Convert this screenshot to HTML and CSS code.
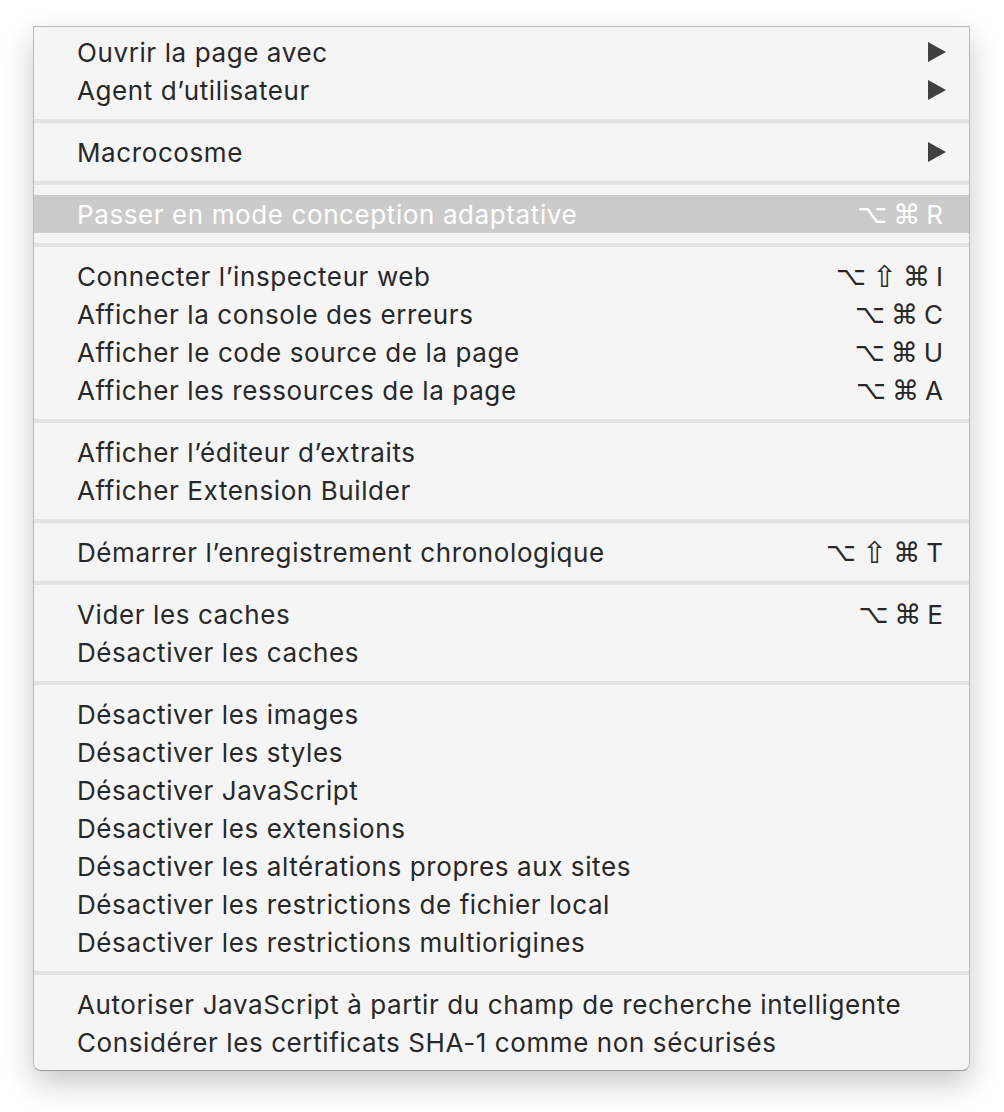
FILE: index.html
```html
<!DOCTYPE html>
<html lang="fr">
<head>
<meta charset="utf-8">
<title>Menu Développement</title>
<link rel="stylesheet" href="styles.css">
</head>
<body>
<div class="menu">
  <div class="row"><span class="label">Ouvrir la page avec</span><svg class="arrow" viewBox="0 0 18 20"><polygon points="0,0 18,10 0,20"/></svg></div>
  <div class="row"><span class="label">Agent d’utilisateur</span><svg class="arrow" viewBox="0 0 18 20"><polygon points="0,0 18,10 0,20"/></svg></div>
  <div class="sep"></div>
  <div class="row"><span class="label">Macrocosme</span><svg class="arrow" viewBox="0 0 18 20"><polygon points="0,0 18,10 0,20"/></svg></div>
  <div class="sep"></div>
  <div class="row active"><span class="label">Passer en mode conception adaptative</span><span class="keys"><span class="k opt">⌥</span><span class="k cmd">⌘</span><span class="k">R</span></span></div>
  <div class="sep"></div>
  <div class="row"><span class="label">Connecter l’inspecteur web</span><span class="keys"><span class="k opt">⌥</span><span class="k shift">⇧</span><span class="k cmd">⌘</span><span class="k">I</span></span></div>
  <div class="row"><span class="label">Afficher la console des erreurs</span><span class="keys"><span class="k opt">⌥</span><span class="k cmd">⌘</span><span class="k">C</span></span></div>
  <div class="row"><span class="label">Afficher le code source de la page</span><span class="keys"><span class="k opt">⌥</span><span class="k cmd">⌘</span><span class="k">U</span></span></div>
  <div class="row"><span class="label">Afficher les ressources de la page</span><span class="keys"><span class="k opt">⌥</span><span class="k cmd">⌘</span><span class="k">A</span></span></div>
  <div class="sep"></div>
  <div class="row"><span class="label">Afficher l’éditeur d’extraits</span></div>
  <div class="row"><span class="label">Afficher Extension Builder</span></div>
  <div class="sep"></div>
  <div class="row"><span class="label">Démarrer l’enregistrement chronologique</span><span class="keys"><span class="k opt">⌥</span><span class="k shift">⇧</span><span class="k cmd">⌘</span><span class="k">T</span></span></div>
  <div class="sep"></div>
  <div class="row"><span class="label">Vider les caches</span><span class="keys"><span class="k opt">⌥</span><span class="k cmd">⌘</span><span class="k">E</span></span></div>
  <div class="row"><span class="label">Désactiver les caches</span></div>
  <div class="sep"></div>
  <div class="row"><span class="label">Désactiver les images</span></div>
  <div class="row"><span class="label">Désactiver les styles</span></div>
  <div class="row"><span class="label">Désactiver JavaScript</span></div>
  <div class="row"><span class="label">Désactiver les extensions</span></div>
  <div class="row"><span class="label">Désactiver les altérations propres aux sites</span></div>
  <div class="row"><span class="label">Désactiver les restrictions de fichier local</span></div>
  <div class="row"><span class="label">Désactiver les restrictions multiorigines</span></div>
  <div class="sep"></div>
  <div class="row"><span class="label">Autoriser JavaScript à partir du champ de recherche intelligente</span></div>
  <div class="row"><span class="label">Considérer les certificats SHA-1 comme non sécurisés</span></div>
</div>
</body>
</html>
```

FILE: styles.css
```css
html, body {
  margin: 0;
  padding: 0;
  background: #ffffff;
}

body {
  min-height: 1112px;
  box-sizing: border-box;
  padding: 26px 0 0 33px;
  font-family: Inter, "Noto Sans", sans-serif;
}

.menu {
  width: 935px;
  background: #f5f5f5;
  border: 1px solid #b9b9b9;
  border-bottom-color: #999999;
  border-radius: 0 0 8px 8px;
  padding: 6px 0 9px;
  box-shadow: 0 12px 30px rgba(0, 0, 0, 0.22);
}

.row {
  height: 38px;
  display: flex;
  align-items: center;
  justify-content: space-between;
  padding: 0 26px 0 43px;
  color: #282828;
  font-size: 26px;
  letter-spacing: 0.6px;
}

.label {
  white-space: nowrap;
}

.row.active {
  background: #cbcbcb;
  color: #ffffff;
}

.arrow {
  width: 18px;
  height: 20px;
  margin-right: -3px;
  fill: #404040;
}

.keys {
  display: inline-flex;
  align-items: center;
  gap: 6px;
  letter-spacing: 0;
}

.k {
  font-size: 26px;
}

.k.opt,
.k.cmd,
.k.shift {
  font-family: "DejaVu Sans", sans-serif;
}

.k.opt {
  font-size: 26px;
}

.k.cmd {
  font-size: 27px;
}

.k.shift {
  font-size: 30px;
}

.sep {
  height: 4px;
  margin: 10px 0;
  background: #e3e3e3;
}
```
